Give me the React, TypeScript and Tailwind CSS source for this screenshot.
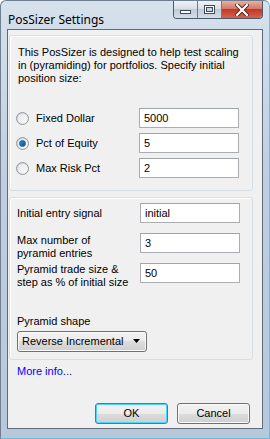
import React from 'react';

const font = { fontFamily: '"Liberation Sans", Arial, sans-serif' };

function Radio({ checked }: { checked?: boolean }) {
  return (
    <div className="w-[13px] h-[13px] rounded-full border border-[#8e9aa6] bg-gradient-to-br from-[#c9ced3] to-[#f7f7f7] flex items-center justify-center shrink-0">
      <div className="w-[9px] h-[9px] rounded-full bg-gradient-to-br from-[#e4e6e8] to-[#fbfbfb] flex items-center justify-center">
        {checked && (
          <div className="w-[7px] h-[7px] rounded-full bg-gradient-to-br from-[#2c8fd4] to-[#0c4f8c] border border-[#1c5f97]" />
        )}
      </div>
    </div>
  );
}

function Field({ value }: { value: string }) {
  return (
    <div className="w-[100px] h-[20px] shrink-0 bg-white border border-[#abadb3] border-t-[#a0a4ab] flex items-center pl-[4px] text-[11px] text-black">
      {value}
    </div>
  );
}

function Button({ label, focused }: { label: string; focused?: boolean }) {
  return (
    <div
      className={`w-[73px] h-[21px] rounded-[3px] border ${
        focused ? 'border-[#3c7fb1] shadow-[inset_0_0_0_1px_#48d7fb]' : 'border-[#707070] shadow-[inset_0_0_0_1px_#fbfbfb]'
      } bg-[linear-gradient(#f2f2f2_0%,#ebebeb_50%,#dddddd_50%,#cfcfcf_100%)] flex items-center justify-center text-[11px] text-black`}
    >
      {label}
    </div>
  );
}

export default function App() {
  return (
    <div style={font} className="w-[270px] h-[439px] bg-[linear-gradient(#d6e1ec,#bfcfdf_40%,#b6c8da)] border border-[#6f7f91] border-r-[#58c8e8] border-b-[#6fb9d8] rounded-t-[6px] flex flex-col overflow-hidden">
      {/* title bar */}
      <div className="h-[28px] flex justify-between shrink-0">
        <div className="pl-[7px] pt-[10px] text-[12px] text-black" style={{ fontFamily: '"Noto Sans", "Open Sans", sans-serif' }}>
          PosSizer Settings
        </div>
        <div className="flex h-[18px] mr-[6px] rounded-b-[4px] border border-t-0 border-[#4b5a6c] overflow-hidden">
          <div className="w-[24px] bg-[linear-gradient(#eef2f6,#d5dde6_50%,#c0ccd8_50%,#d4dde7)] border-r border-[#6d7c8c] flex items-center justify-center">
            <div className="w-[11px] h-[4px] mt-[4px] bg-white border border-[#3d4b5a]" />
          </div>
          <div className="w-[24px] bg-[linear-gradient(#eef2f6,#d5dde6_50%,#c0ccd8_50%,#d4dde7)] border-r border-[#6d7c8c] flex items-center justify-center">
            <div className="w-[11px] h-[9px] border border-[#3d4b5a] bg-white flex items-center justify-center">
              <div className="w-[7px] h-[5px] border border-[#3d4b5a] bg-[#c9d3de]" />
            </div>
          </div>
          <div className="w-[40px] bg-[linear-gradient(#e8b0a4,#d47866_45%,#c0392a_50%,#d9614d)] flex items-center justify-center">
            <svg width="14" height="12" viewBox="0 0 14 12">
              <path d="M2 1 L12 11 M12 1 L2 11" stroke="#5a1d14" strokeWidth="4" strokeLinecap="square" />
              <path d="M2 1 L12 11 M12 1 L2 11" stroke="#ffffff" strokeWidth="2.2" strokeLinecap="square" />
            </svg>
          </div>
        </div>
      </div>

      {/* client area */}
      <div className="flex-1 mx-[6px] mb-[9px] border border-[#5d6b7a] bg-[#f0f0f0] flex flex-col pt-[5px] pl-[1px] pr-[9px] text-[11px] text-black">
        <div className="h-[156px] shrink-0 rounded-[3px] border border-[#d5dfe5] shadow-[inset_1px_1px_0_#ffffff] pl-[8px] pt-[10px]">
          <p className="leading-[13px] whitespace-nowrap">
            This PosSizer is designed to help test scaling<br />
            in (pyramiding) for portfolios. Specify initial<br />
            position size:
          </p>
          <div className="mt-[23px] flex flex-col gap-[5px]">
            {[
              ['Fixed Dollar', '5000', false],
              ['Pct of Equity', '5', true],
              ['Max Risk Pct', '2', false],
            ].map(([label, val, on]) => (
              <div key={label as string} className="h-[20px] flex items-center">
                <div className="-ml-[2px] w-[20px]">
                  <Radio checked={on as boolean} />
                </div>
                <span className="w-[103px]">{label as string}</span>
                <Field value={val as string} />
              </div>
            ))}
          </div>
        </div>

        <div className="mt-[6px] h-[163px] shrink-0 rounded-[3px] border border-[#d5dfe5] shadow-[inset_1px_1px_0_#ffffff] pl-[7px] pt-[5px] flex flex-col">
          <div className="h-[20px] flex items-center">
            <span className="w-[123px]">Initial entry signal</span>
            <Field value="initial" />
          </div>
          <div className="mt-[10px] flex">
            <span className="w-[123px] leading-[13px] pt-[1px]">Max number of<br />pyramid entries</span>
            <Field value="3" />
          </div>
          <div className="mt-[3px] flex">
            <span className="w-[123px] leading-[13px]">Pyramid trade size &amp;<br />step as % of initial size</span>
            <Field value="50" />
          </div>
          <div className="mt-[26px] leading-[13px]">Pyramid shape</div>
          <div className="mt-[3px] w-[130px] h-[21px] rounded-[3px] border border-[#707070] shadow-[inset_0_0_0_1px_#fbfbfb] bg-[linear-gradient(#f2f2f2_0%,#ebebeb_50%,#dddddd_50%,#cfcfcf_100%)] flex items-center justify-between pl-[4px] pr-[5px]">
            <span>Reverse Incremental</span>
            <svg width="8" height="5" viewBox="0 0 8 5">
              <path d="M0 0 H7 L3.5 4 Z" fill="#000" />
            </svg>
          </div>
        </div>

        <div className="mt-[5px] pl-[8px] text-[#0000ff] leading-[13px]">More info...</div>

        <div className="mt-[25px] flex justify-end gap-[9px] pr-[3px]">
          <Button label="OK" focused />
          <Button label="Cancel" />
        </div>
      </div>
    </div>
  );
}
